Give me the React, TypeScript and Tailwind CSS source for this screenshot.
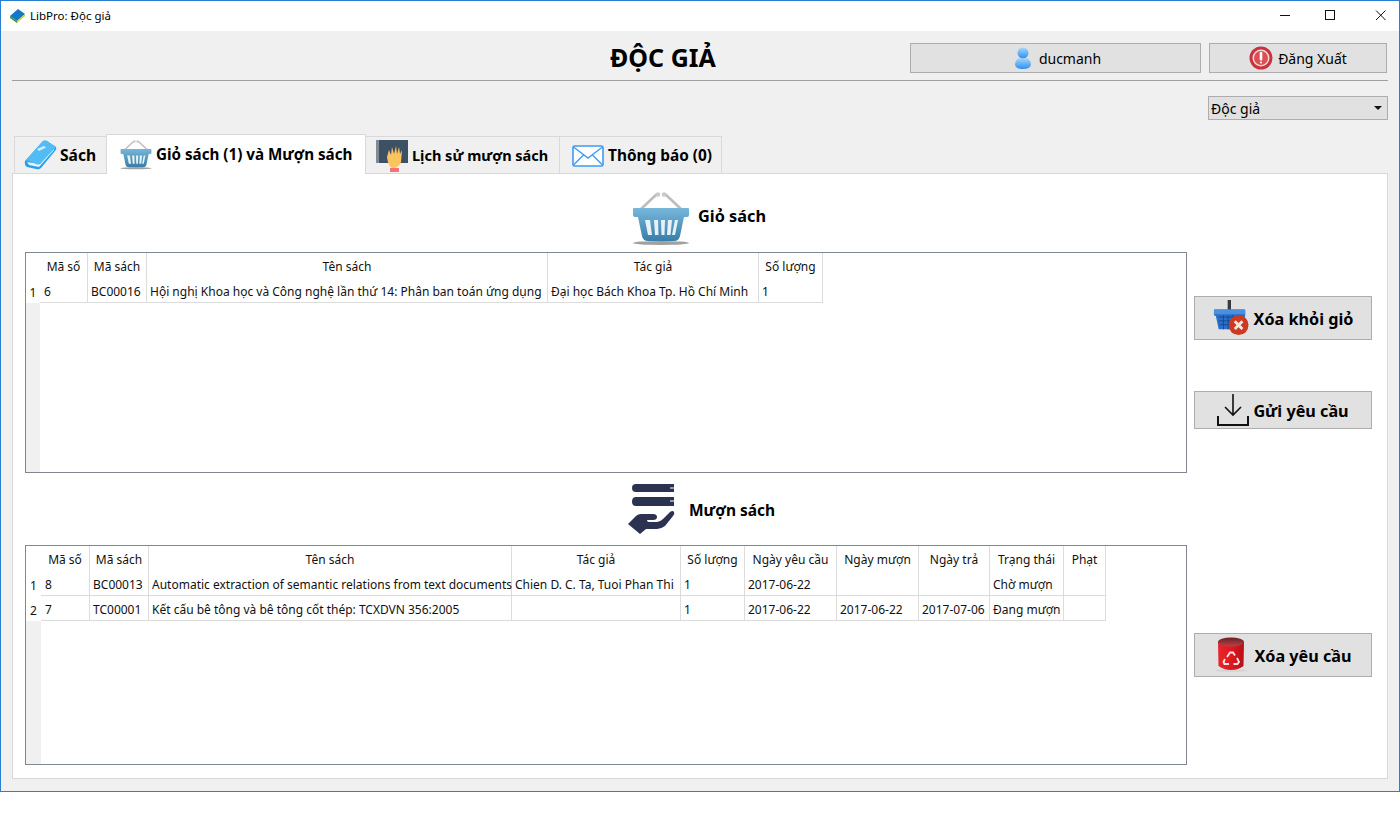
import { FC, ReactNode } from 'react';

const font = 'font-["Noto_Sans",sans-serif]';

const BookIcon: FC = () => (
  <svg viewBox="0 0 33 31" className="w-[33px] h-[31px]">
    <path d="M1 21 L19 1 Q21 0 23 1 L32 7 Q33 9 31 11 L17 28 Q15 30 12 29 L3 27 Q0 25 1 21Z" fill="#2e9fe6" />
    <path d="M3 22 L5 25 L15 27 L30 10 L30 8 L16 24 Z" fill="#e4f4fd" />
    <path d="M1 21 L19 1 Q21 0 23 1 L32 7 L16 24 Q14 25 12 24 L5 21 Q3 20 1 21Z" fill="#53bcf5" />
    <path d="M13 9 L20 6 L22 7.5 L15 11 Z" fill="#d5eefc" />
  </svg>
);

const BasketIcon: FC<{ className: string }> = ({ className }) => (
  <svg viewBox="0 0 58 54" className={className}>
    <defs>
      <linearGradient id="basketBody" x1="0" y1="0" x2="0" y2="1">
        <stop offset="0" stopColor="#77b7da" />
        <stop offset="1" stopColor="#387ea8" />
      </linearGradient>
    </defs>
    <ellipse cx="29" cy="51" rx="28" ry="2" fill="#a0a0a0" />
    <path d="M9 17 L25 2 M49 17 L33 2" stroke="#bdbdbd" strokeWidth="2.6" fill="none" />
    <circle cx="26" cy="2.5" r="2.2" fill="#c9c9c9" />
    <circle cx="32" cy="2.5" r="2.2" fill="#c9c9c9" />
    <path d="M1 17 Q1 16 2 16 L56 16 Q57 16 57 17 L57 23 Q57 25 55 25 L52 25 L48 44 Q47 49 42 49 L16 49 Q11 49 10 44 L6 25 L3 25 Q1 25 1 23Z" fill="url(#basketBody)" />
    <path d="M13 28 h5 l2 15 h-4z M22 28 h4 l.5 15 h-3.500z M29 28 h4 l-.5 15 h-3z M36 28 h4 l-1.500 15 h-3.500z M43 28 h3 l-3 15 h-3z" fill="#e6f2f8" />
  </svg>
);

const HandBookIcon: FC = () => (
  <svg viewBox="0 0 32 32" className="w-8 h-8">
    <rect x="1" y="0" width="31" height="23" fill="#3d5164" />
    <rect x="0" y="0" width="3" height="23" fill="#808b96" />
    <path d="M11 17 L13 10 L15 15 L16 7 L18 14 L20 6 L21 14 L23 7 L24 14 L26 10 L25 22 Q23 28 16 28 Q12 26 11 17Z" fill="#fbc45c" />
    <rect x="14" y="28" width="9" height="4" fill="#f2737b" />
  </svg>
);

const MailIcon: FC = () => (
  <svg viewBox="0 0 32 22" className="w-8 h-[22px]">
    <rect x="1" y="1" width="30" height="20" rx="1.5" fill="#fff" stroke="#3f9bf5" strokeWidth="1.6" />
    <path d="M1.5 2 L16 13 L30.5 2 M1.5 20 L11.5 10 M30.5 20 L20.5 10" stroke="#3f9bf5" strokeWidth="1.4" fill="none" />
  </svg>
);

const UserIcon: FC = () => (
  <svg viewBox="0 0 16 22" className="w-4 h-[22px]">
    <defs>
      <linearGradient id="userFill" x1="0" y1="0" x2="0" y2="1">
        <stop offset="0" stopColor="#a5d8fb" />
        <stop offset="1" stopColor="#2f8ff0" />
      </linearGradient>
    </defs>
    <ellipse cx="8" cy="6" rx="5.5" ry="5.5" fill="url(#userFill)" />
    <path d="M4 11 Q8 13 12 11 Q16 13 16 18 Q15 22 8 22 Q1 22 0 18 Q0 13 4 11Z" fill="url(#userFill)" />
  </svg>
);

const PowerIcon: FC = () => (
  <svg viewBox="0 0 24 24" className="w-6 h-6">
    <circle cx="12" cy="12" r="11.5" fill="#c9343c" />
    <circle cx="12" cy="12" r="8.5" fill="#f4d9da" />
    <circle cx="12" cy="12" r="7" fill="#dc4f55" />
    <rect x="10.7" y="6" width="2.6" height="8.500" rx="1" fill="#fff" />
    <circle cx="12" cy="16.500" r="1" fill="#fff" />
  </svg>
);

const BasketRemoveIcon: FC = () => (
  <svg viewBox="0 0 38 38" className="w-9 h-9">
    <rect x="15.5" y="0" width="3.5" height="18" fill="#333a44" />
    <path d="M2 10 L33 10 Q34 10 34 12 L34 16 L31 31 L6 31 L3 17 L1 16 L1 11 Q1 10 2 10Z" fill="#2a6fc9" />
    <rect x="1" y="10" width="33" height="5" fill="#4a8fe0" />
    <path d="M6 18 H31 M6 22 H30 M7 26 H30 M11 16 V31 M16 16 V31 M21 16 V31 M26 16 V31" stroke="#134a94" strokeWidth="1" />
    <circle cx="27" cy="26.5" r="10.5" fill="#cc3a22" />
    <path d="M23 22.5 L31 30.5 M31 22.5 L23 30.5" stroke="#f4e6e2" strokeWidth="3" />
  </svg>
);

const DownloadIcon: FC = () => (
  <svg viewBox="0 0 32 32" fill="none" stroke="#111" className="w-8 h-8">
    <path d="M16 0 V21 M8 13 L16 21 L24 13" strokeWidth="1.6" />
    <path d="M1 22 V31 H31 V22" strokeWidth="2" />
  </svg>
);

const TrashIcon: FC = () => (
  <svg viewBox="0 0 34 36" className="w-[34px] h-9">
    <defs>
      <linearGradient id="trashBody" x1="0" y1="0" x2="1" y2="0">
        <stop offset="0" stopColor="#e8262c" />
        <stop offset="0.5" stopColor="#e0181f" />
        <stop offset="1" stopColor="#b80f16" />
      </linearGradient>
      <linearGradient id="trashMouth" x1="0" y1="0" x2="0" y2="1">
        <stop offset="0" stopColor="#6e1f22" />
        <stop offset="1" stopColor="#b5444a" />
      </linearGradient>
    </defs>
    <ellipse cx="17" cy="33.5" rx="16" ry="1.500" fill="#d4d4d4" />
    <path d="M4 5 L30 5 L29.500 29 Q24 33 17 33 Q10 33 4.500 29Z" fill="url(#trashBody)" />
    <ellipse cx="17" cy="5" rx="13" ry="4.500" fill="url(#trashMouth)" />
    <path d="M13 20 L16 15.500 L19 15.500 L21 18.500 M23 21 L25 25 L23.500 27 L19.500 27 M15 27 L10.500 27 L9.500 25 L11 22" fill="none" stroke="#f8e8e8" strokeWidth="1.800" />
  </svg>
);

const BooksHandIcon: FC = () => (
  <svg viewBox="0 0 48 52" className="w-12 h-[52px]">
    <path d="M9 1 H47 V4.500 H43 V5.500 H47 V9 H9 Q5 9 5 5 Q5 1 9 1Z" fill="#2b3350" />
    <path d="M9 14 H47 V17.500 H43 V18.500 H47 V23 H9 Q5 23 5 18.500 Q5 14 9 14Z" fill="#2b3350" />
    <path d="M1 41 L9 33 Q11 31 14 31 L26 31 Q30 31 30 34 Q30 37 26 37 L20 37 Q20 39 22 39 L30 39 Q33 39 36 36 L43 29 Q46 27 47 29 Q48 31 46 33 L38 43 Q34 46 30 46 L19 46 L13 51 Z" fill="#2b3350" />
  </svg>
);

const LogoIcon: FC = () => (
  <svg viewBox="0 0 16 16" className="w-4 h-4">
    <path d="M1 8 L9 1 L16 6 L8 13Z" fill="#1478c8" />
    <path d="M1 8 L8 13 L8 15 L1 10Z" fill="#3f8f3c" />
    <path d="M8 13 L16 6 L16 8 L8 15Z" fill="#c9d63c" />
  </svg>
);

const Tab: FC<{ className: string; children: ReactNode }> = ({ className, children }) => (
  <div className={`flex items-center border border-[#d9d9d9] font-bold text-black whitespace-nowrap ${className}`}>
    {children}
  </div>
);

const ActionButton: FC<{ className: string; label: string; children: ReactNode }> = ({ className, label, children }) => (
  <button className={`flex items-center justify-center w-[178px] border border-[#adadad] bg-[#e1e1e1] text-[16.2px] font-bold text-black ${className}`}>
    {children}
    <span className="mt-[2px]">{label}</span>
  </button>
);

interface DataTableProps {
  heightClass: string;
  gridClass: string;
  headers: string[];
  rows: string[][];
  headWidth: string;
}

const DataTable: FC<DataTableProps> = ({ heightClass, gridClass, headers, rows, headWidth }) => (
  <div className={`flex border border-[#828790] bg-white text-[12px] leading-none text-[#111] ${heightClass}`}>
    <div className={`shrink-0 bg-[#f0f0f0] ${headWidth}`}>
      <div className="h-[25px] bg-white" />
      {rows.map((_, i) => (
        <div key={i} className="h-[25px] pt-[4px] bg-white flex items-center justify-center">{i + 1}</div>
      ))}
    </div>
    <div className={`grid content-start ${gridClass}`}>
      {headers.map((h) => (
        <div key={h} className="h-[25px] pt-[2px] flex items-center justify-center border-r border-[#dcdcdc] whitespace-nowrap">{h}</div>
      ))}
      {rows.map((row, r) =>
        row.map((cell, c) => (
          <div
            key={`${r}-${c}`}
            className={`h-[25px] pt-[4px] flex items-center border-r border-b border-[#dcdcdc] whitespace-nowrap ${c === 0 ? 'pl-[4px]' : 'pl-[3px]'}`}
          >
            {cell}
          </div>
        )),
      )}
    </div>
  </div>
);

export default function App() {
  return (
    <div className={`${font} h-[833px] bg-white`}>
      <div className="h-[792px] border border-[#2b7fd0] bg-[#f0f0f0] flex flex-col">
        {/* Title bar */}
        <div className="h-[30px] shrink-0 bg-white flex items-center pl-2 text-[11.5px] text-black">
          <LogoIcon />
          <span className="ml-[5px]">LibPro: Độc giả</span>
          <div className="ml-auto flex items-center text-black">
            <svg viewBox="0 0 106 14" className="w-[106px] h-[14px] mr-[13px]" fill="none" stroke="#111" strokeWidth="1">
              <path d="M0 6.5 H10" />
              <rect x="45.5" y="1.5" width="9" height="9" />
              <path d="M96 1.5 L105.500 11 M105.500 1.500 L96 11" />
            </svg>
          </div>
        </div>

        {/* Header */}
        <div className="flex items-center h-[50px] shrink-0 mx-[11px] border-b border-[#a0a0a0] pb-[7px] pt-[12px] box-border">
          <h1 className="w-[898px] pl-[598px] text-[25px] font-bold text-black whitespace-nowrap">ĐỘC GIẢ</h1>
          <button className="w-[291px] h-[30px] pl-[5px] border border-[#adadad] bg-[#e1e1e1] flex items-center justify-center gap-2 text-[14px] text-black">
            <UserIcon />
            <span>ducmanh</span>
          </button>
          <button className="ml-2 w-[178px] h-[30px] border border-[#adadad] bg-[#e1e1e1] flex items-center justify-center gap-[5px] text-[14px] text-black">
            <PowerIcon />
            <span>Đăng Xuất</span>
          </button>
        </div>

        {/* Role select */}
        <div className="flex justify-end mr-[11px] mt-[15px]">
          <div className="w-[180px] h-6 border border-[#adadad] bg-[#e1e1e1] flex items-center justify-between pl-[2px] pr-[5px] text-[14px] text-black">
            Độc giả
            <svg viewBox="0 0 8 4" className="w-2 h-1"><path d="M0 0 H8 L4 4Z" fill="#111" /></svg>
          </div>
        </div>

        {/* Tabs */}
        <div className="flex items-end mt-[14px] ml-[13px] h-[40px] -mb-px relative z-10">
          <Tab className="w-[93px] h-[38px] pl-[9px] border-b-0 gap-[3px] text-[15.6px]">
            <BookIcon />
            Sách
          </Tab>
          <Tab className="w-[260px] h-[40px] -ml-px pl-[13px] gap-[4px] bg-white border-b-0 text-[15.2px]">
            <BasketIcon className="w-8 h-[30px]" />
            Giỏ sách (1) và Mượn sách
          </Tab>
          <Tab className="w-[195px] h-[38px] -ml-px pl-[11px] gap-[4px] border-b-0 border-l-0 text-[14.5px]">
            <HandBookIcon />
            Lịch sử mượn sách
          </Tab>
          <Tab className="w-[163px] h-[38px] -ml-px pl-[12px] gap-[4px] border-b-0 text-[15.4px]">
            <MailIcon />
            Thông báo (0)
          </Tab>
        </div>

        {/* Panel */}
        <div className="mx-[11px] h-[606px] border border-[#d9d9d9] bg-white pl-3 flex">
          <div className="w-[1162px] shrink-0">
            <div className="h-[78px] flex items-center pl-[607px] pt-[11px]">
              <BasketIcon className="w-[58px] h-[54px]" />
              <span className="ml-[8px] mb-[4px] text-[16.3px] font-bold text-black">Giỏ sách</span>
            </div>
            <DataTable
              heightClass="h-[221px]"
              headWidth="w-[14px]"
              gridClass="grid-cols-[48px_59px_401px_211px_64px]"
              headers={['Mã số', 'Mã sách', 'Tên sách', 'Tác giả', 'Số lượng']}
              rows={[[
                '6',
                'BC00016',
                'Hội nghị Khoa học và Công nghệ lần thứ 14: Phân ban toán ứng dụng',
                'Đại học Bách Khoa Tp. Hồ Chí Minh',
                '1',
              ]]}
            />
            <div className="h-[72px] flex items-center pl-[602px]">
              <BooksHandIcon />
              <span className="ml-[14px] mt-[3px] text-[15.5px] font-bold text-black">Mượn sách</span>
            </div>
            <DataTable
              heightClass="h-[220px]"
              headWidth="w-[15px]"
              gridClass="grid-cols-[49px_59px_363px_169px_64px_92px_82px_71px_74px_42px]"
              headers={['Mã số', 'Mã sách', 'Tên sách', 'Tác giả', 'Số lượng', 'Ngày yêu cầu', 'Ngày mượn', 'Ngày trả', 'Trạng thái', 'Phạt']}
              rows={[
                ['8', 'BC00013', 'Automatic extraction of semantic relations from text documents', 'Chien D. C. Ta, Tuoi Phan Thi', '1', '2017-06-22', '', '', 'Chờ mượn', ''],
                ['7', 'TC00001', 'Kết cấu bê tông và bê tông cốt thép: TCXDVN 356:2005', '', '1', '2017-06-22', '2017-06-22', '2017-07-06', 'Đang mượn', ''],
              ]}
            />
          </div>

          {/* Actions */}
          <div className="ml-[7px] flex flex-col">
            <ActionButton className="h-11 mt-[122px] gap-[5px]" label="Xóa khỏi giỏ">
              <BasketRemoveIcon />
            </ActionButton>
            <ActionButton className="h-[38px] mt-[51px] gap-[4px]" label="Gửi yêu cầu">
              <DownloadIcon />
            </ActionButton>
            <ActionButton className="h-11 mt-[204px] gap-[6px]" label="Xóa yêu cầu">
              <TrashIcon />
            </ActionButton>
          </div>
        </div>
      </div>
    </div>
  );
}
